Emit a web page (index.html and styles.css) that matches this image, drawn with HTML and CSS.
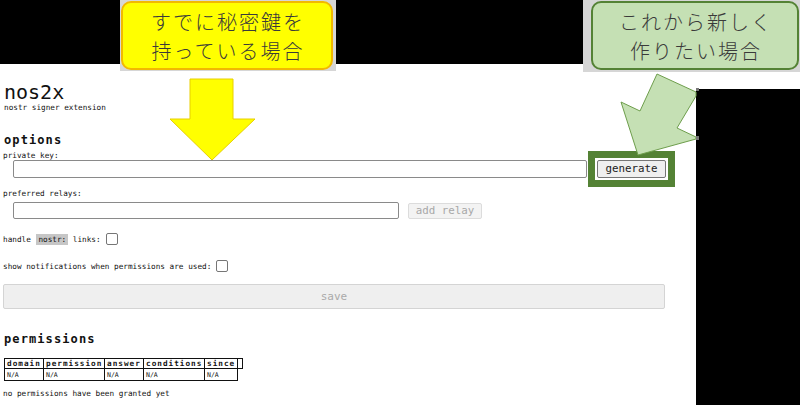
FILE: index.html
```html
<!DOCTYPE html>
<html lang="ja">
<head>
<meta charset="utf-8">
<title>nos2x options</title>
<link rel="stylesheet" href="styles.css">
</head>
<body>
<div class="stage">
  <div class="strip"></div>
  <main class="panel">
    <h1 class="title">nos2x</h1>
    <p class="sub">nostr signer extension</p>
    <h2 class="head">options</h2>
    <div class="label">private key:</div>
    <div class="row row-key">
      <input class="field field-key" type="text">
      <button class="btn btn-gen">generate</button>
    </div>
    <div class="label label-relays">preferred relays:</div>
    <div class="row row-relay">
      <input class="field field-relay" type="text">
      <button class="btn btn-add" disabled>add relay</button>
    </div>
    <div class="row check-row row-handle">
      <span class="txt">handle </span><code class="code">nostr:</code><span class="txt"> links:</span>
      <input class="cb" type="checkbox">
    </div>
    <div class="row check-row row-notif">
      <span class="txt">show notifications when permissions are used:</span>
      <input class="cb" type="checkbox">
    </div>
    <button class="btn btn-save" disabled>save</button>
    <h2 class="head head-perm">permissions</h2>
    <table class="perm">
      <thead>
        <tr><th class="c1">domain</th><th class="c2">permission</th><th class="c3">answer</th><th class="c4">conditions</th><th class="c5">since</th><th class="c6"></th></tr>
      </thead>
      <tbody>
        <tr><td>N/A</td><td>N/A</td><td>N/A</td><td>N/A</td><td>N/A</td></tr>
      </tbody>
    </table>
    <p class="none">no permissions have been granted yet</p>
  </main>

  <div class="hl-box"></div>

  <div class="callout-bg callout-bg-yellow"></div>
  <div class="callout callout-yellow">
    <span class="cl-line">すでに秘密鍵を</span>
    <span class="cl-line">持っている場合</span>
  </div>
  <div class="callout-bg callout-bg-green"></div>
  <div class="callout callout-green">
    <span class="cl-line">これから新しく</span>
    <span class="cl-line">作りたい場合</span>
  </div>

  <svg class="arrows" width="700" height="170" viewBox="0 0 700 170">
    <polygon points="190,79 233,79 233,119 255,119 212,160 170,119 190,119" fill="#FFFF00" stroke="#E8CF00" stroke-width="1"/>
    <polygon points="657,74 696,92 696,96 677,128 696,137 696,139 638,155 621,102 640,111" fill="#C5E0B4" stroke="#6E9E4C" stroke-width="1"/>
    <rect x="696" y="88" width="3" height="3" fill="#777"/>
    <rect x="696" y="136" width="3" height="4" fill="#777"/>
  </svg>
</div>
</body>
</html>
```
FILE: styles.css
```css
* { box-sizing: border-box; }
html, body { margin: 0; padding: 0; }
body {
  background: #000;
  width: 800px;
  height: 405px;
  overflow: hidden;
  font-family: "DejaVu Sans Mono", "Liberation Mono", monospace;
}
.stage {
  position: relative;
  width: 800px;
  height: 405px;
  padding-top: 64px;
}
.strip {
  position: absolute;
  left: 696px;
  top: 64px;
  width: 104px;
  height: 25px;
  background: #fff;
}
.panel {
  width: 696px;
  height: 341px;
  background: #fff;
  padding-left: 3px;
  overflow: hidden;
  color: #111;
}
.title {
  margin: 18px 0 0 1px;
  font-size: 20px;
  line-height: 20px;
  font-weight: normal;
}
.sub {
  margin: 1px 0 0 1px;
  font-size: 7.7px;
  line-height: 10px;
}
.head {
  margin: 20px 0 0 1px;
  font-size: 12px;
  line-height: 14px;
  font-weight: bold;
  letter-spacing: 1.1px;
}
.label {
  margin-top: 4px;
  font-size: 7.7px;
  line-height: 9px;
}
.label-relays { margin-top: 11px; }
.row {
  display: flex;
  align-items: flex-start;
}
.row-key { height: 18px; }
.row-relay { margin-top: 4px; height: 17px; }
.field {
  height: 18px;
  border: 1px solid #8a8a8a;
  border-radius: 2px;
  background: #fff;
  padding: 0;
  margin: 0 0 0 10px;
}
.field-key { width: 574px; }
.field-relay { width: 386px; height: 17px; }
.btn {
  font-family: "DejaVu Sans Mono", "Liberation Mono", monospace;
  font-size: 10.8px;
  padding: 0;
  margin: 0;
  border-radius: 2px;
  line-height: 14px;
}
.btn-gen {
  margin-left: 10px;
  width: 69px;
  height: 18px;
  background: #efefef;
  border: 1px solid #767676;
  color: #222;
}
.btn-add {
  margin: 1px 0 0 9px;
  width: 74px;
  height: 16px;
  background: #f3f3f3;
  border: 1px solid #dcdcdc;
  color: #a8a8a8;
}
.check-row {
  align-items: center;
  height: 12px;
  font-size: 7.7px;
  line-height: 9px;
  white-space: pre;
}
.row-handle { margin-top: 14px; }
.row-notif { margin-top: 15px; }
.code {
  font-family: "DejaVu Sans Mono", "Liberation Mono", monospace;
  font-size: 7.7px;
  background: #c6c6c6;
  height: 11px;
  line-height: 11px;
  padding: 0 2px;
  margin-left: 1px;
}
.cb {
  appearance: none;
  -webkit-appearance: none;
  width: 12px;
  height: 12px;
  margin: 0 0 0 5px;
  border: 1px solid #767676;
  border-radius: 2px;
  background: #fff;
}
.btn-save {
  display: block;
  margin-top: 12px;
  width: 662px;
  height: 25px;
  background: #efefef;
  border: 1px solid #d4d4d4;
  color: #aaa;
  font-size: 11px;
}
.head-perm { margin-top: 23px; }
.perm {
  margin: 12px 0 0 1px;
  border-collapse: collapse;
  font-size: 7.7px;
}
.perm th, .perm td {
  border: 1px solid #111;
  padding: 0 0 0 2px;
  text-align: left;
}
.perm th {
  height: 10px;
  line-height: 8px;
  font-weight: bold;
  letter-spacing: 1px;
}
.perm td {
  height: 12px;
  font-size: 6.5px;
  line-height: 10px;
}
.c1 { width: 39px; }
.c2 { width: 61px; }
.c3 { width: 39px; }
.c4 { width: 61px; }
.c5 { width: 33px; }
.c6 { width: 5px; }
.none {
  margin: 8px 0 0 0;
  font-size: 7.7px;
  line-height: 9px;
}

/* annotation overlays */
.hl-box {
  position: absolute;
  left: 588px;
  top: 151px;
  width: 87px;
  height: 36px;
  border: 7px solid #548235;
}
.callout-bg {
  position: absolute;
  top: 0;
  background: #d6d6d6;
}
.callout-bg-yellow { left: 120px; width: 216px; height: 71px; }
.callout-bg-green { left: 583px; width: 217px; height: 72px; }
.callout {
  position: absolute;
  top: 1px;
  height: 69px;
  border-radius: 10px;
  border: 2px solid;
  display: flex;
  flex-direction: column;
  align-items: center;
  justify-content: center;
  text-align: center;
  font-family: "Noto Sans CJK JP Light", "Noto Sans CJK JP", "Noto Sans", sans-serif;
  font-weight: 300;
  font-size: 20px;
  letter-spacing: 2px;
  color: #3a3a3a;
}
.cl-line {
  display: block;
  line-height: 29px;
  height: 29px;
  margin-right: -2px;
}
.callout-yellow {
  left: 121px;
  width: 212px;
  background: #FFFF00;
  border-color: #F2B800;
}
.callout-green {
  left: 591px;
  width: 208px;
  background: #C5E0B4;
  border-color: #548235;
}
.arrows {
  position: absolute;
  left: 0;
  top: 0;
}
```
